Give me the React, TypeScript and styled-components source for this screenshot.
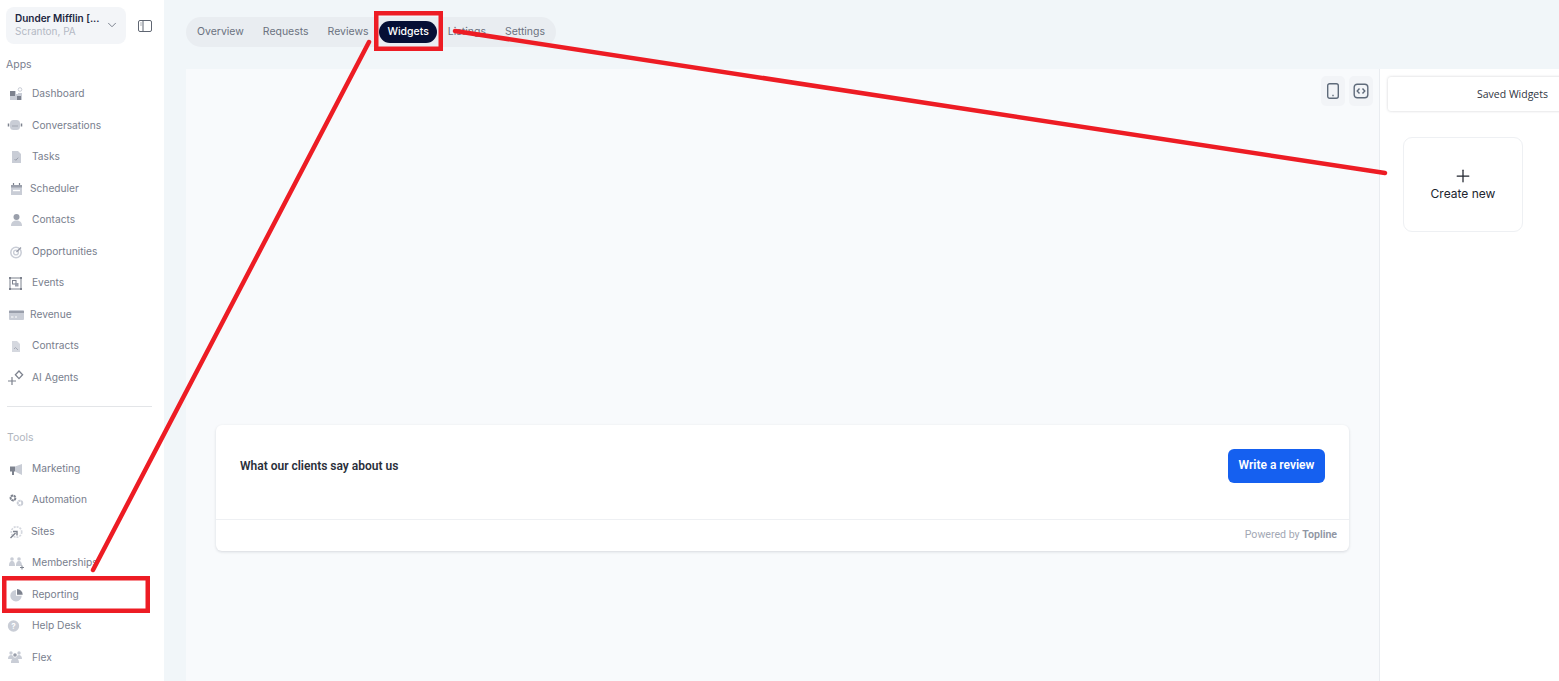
import React from 'react'
import styled, { createGlobalStyle } from 'styled-components'
import { ChevronDown, Plus } from 'lucide-react'

const GlobalStyle = createGlobalStyle`
  html, body {
    margin: 0;
    padding: 0;
    height: 100%;
    overflow: hidden;
    background: #f1f6f9;
  }

  * {
    box-sizing: border-box;
  }
`

const Page = styled.div`
  position: relative;
  display: flex;
  width: 100%;
  height: 100vh;
  overflow: hidden;
  font-family: Inter, 'Liberation Sans', sans-serif;
`

const Sidebar = styled.aside`
  flex: 0 0 164px;
  display: flex;
  flex-direction: column;
  padding-top: 7px;
  background: #fff;
`

const AccountRow = styled.div`
  display: flex;
  align-items: center;
  gap: 11px;
  padding-left: 6px;
`

const AccountCard = styled.div`
  display: flex;
  align-items: center;
  justify-content: space-between;
  width: 120px;
  height: 37px;
  padding: 0 7px 2px 9px;
  border-radius: 8px;
  background: #f3f5f8;
  color: #6b7280;
`

const AccountName = styled.div`
  font-size: 10px;
  font-weight: 600;
  line-height: 13px;
  color: #1c2540;
`

const AccountCity = styled.div`
  font-size: 10px;
  line-height: 13px;
  color: #b4b9c4;
`

const SectionLabel = styled.div<{ $muted?: boolean }>`
  padding-left: ${(p) => (p.$muted ? 7 : 6)}px;
  font-size: 10.5px;
  line-height: 13px;
  color: ${(p) => (p.$muted ? '#b0b5be' : '#7a8090')};
`

const AppsLabel = styled(SectionLabel)`
  margin-top: 14px;
`

const NavList = styled.nav<{ $top: number }>`
  display: flex;
  flex-direction: column;
  margin-top: ${(p) => p.$top}px;
`

const NavItem = styled.div`
  display: flex;
  align-items: center;
  height: 31.5px;
  padding-left: 7px;
  font-size: 10.2px;
  color: #787e8d;

  svg {
    flex: 0 0 auto;
    display: block;
  }
`

const IconSlot = styled.span<{ $width: number }>`
  flex: 0 0 ${(p) => p.$width}px;
  display: flex;
  align-items: center;
`

const Divider = styled.hr`
  width: 145px;
  height: 1px;
  margin: 13.4px 0 24px 7px;
  border: 0;
  background: #e3e5e8;
`

const Main = styled.main`
  flex: 1;
  min-width: 0;
  display: flex;
  flex-direction: column;
  padding-left: 22px;
`

const TopBar = styled.div`
  flex: 0 0 69px;
  padding-top: 17px;
`

const Tabs = styled.div`
  display: inline-flex;
  align-items: center;
  gap: 3px;
  height: 30px;
  padding: 0 3px;
  border-radius: 15px;
  background: #e9edf1;
`

const Tab = styled.div<{ $active?: boolean }>`
  height: 22px;
  padding: 0 8px;
  border-radius: 11px;
  font-size: 10.47px;
  line-height: 22px;
  color: ${(p) => (p.$active ? '#fff' : '#6b7280')};
  background: ${(p) => (p.$active ? '#050f35' : 'transparent')};
  font-weight: ${(p) => (p.$active ? 500 : 400)};
`

const Workspace = styled.div`
  flex: 1;
  display: flex;
  min-height: 0;
`

const Canvas = styled.section`
  flex: 1;
  min-width: 0;
  padding: 7px 6px 0 30px;
  border-right: 1px solid #e9ecf0;
  background: #f8fafc;
`

const CanvasTools = styled.div`
  display: flex;
  justify-content: flex-end;
  gap: 4px;
`

const ToolButton = styled.div`
  display: flex;
  align-items: center;
  justify-content: center;
  width: 24px;
  height: 30px;
  border-radius: 5px;
  background: #f2f4f7;
  color: #5f6b7a;
`

const WidgetCard = styled.article`
  margin: 319px 24px 0 0;
  border-radius: 6px;
  background: #fff;
  box-shadow: 0 1px 3px rgba(15, 23, 42, 0.14);
  font-family: Roboto, 'Liberation Sans', sans-serif;
`

const WidgetHeader = styled.header`
  display: flex;
  align-items: flex-start;
  justify-content: space-between;
  height: 95px;
  padding: 24px 24px 0;
  border-bottom: 1px solid #eef0f3;
`

const WidgetTitle = styled.h2`
  margin: 10px 0 0;
  font-size: 12px;
  font-weight: 600;
  line-height: 15px;
  color: #2a2f3a;
`

const ReviewButton = styled.button`
  width: 97px;
  height: 34px;
  padding: 0 0 2px;
  border: 0;
  border-radius: 6px;
  background: #1560f0;
  color: #fff;
  font-family: inherit;
  font-size: 12px;
  font-weight: 600;
`

const WidgetFooter = styled.footer`
  height: 31px;
  padding-right: 12px;
  font-size: 10.6px;
  line-height: 30px;
  text-align: right;
  color: #a3a8b4;

  b {
    font-weight: 600;
    color: #8f95a3;
  }
`

const SidePanel = styled.aside`
  flex: 0 0 179px;
  padding: 8px 0 0 8px;
  overflow: hidden;
  background: #fff;
`

const PanelTab = styled.div`
  height: 34px;
  margin-right: -8px;
  padding-left: 89px;
  border-radius: 3px 0 0 3px;
  background: #fff;
  box-shadow: 0 0 3px rgba(15, 23, 42, 0.2);
  font-family: 'Open Sans', 'Liberation Sans', sans-serif;
  font-size: 10.5px;
  line-height: 34px;
  color: #2f3542;
  white-space: nowrap;
`

const CreateCard = styled.div`
  display: flex;
  flex-direction: column;
  align-items: center;
  width: 120px;
  height: 95px;
  margin: 26px 0 0 15px;
  padding-top: 28px;
  border: 1px solid #eef0f3;
  border-radius: 9px;
  background: #fff;
  color: #20242e;
  font-size: 12px;
  line-height: 16px;
`

const Annotations = styled.svg`
  position: absolute;
  inset: 0;
  width: 100%;
  height: 100%;
  pointer-events: none;
`

const shade = '#c9cdd6'
const mid = '#9a9fab'
const dark = '#7d828e'

const Svg: React.FC<{ children: React.ReactNode }> = ({ children }) => (
  <svg width={18} height={16} viewBox="0 0 18 16" aria-hidden="true">
    {children}
  </svg>
)

const icons: Record<string, React.ReactNode> = {
  Dashboard: (
    <Svg>
      <path d="M3 6h6v3h2v-1h4v7H3z" fill={shade} />
      <path d="M3 6h5v5H3zM10 11h4v4h-4z" fill={dark} />
      <circle cx="13" cy="4.500" r="1.800" fill="none" stroke={shade} />
    </Svg>
  ),
  Conversations: (
    <Svg>
      <rect x="3" y="3" width="10" height="10" rx="3.500" fill={shade} />
      <path d="M1.500 6.500v3M14.500 6.500v3" stroke={dark} strokeWidth="1.500" />
      <path d="M5.500 9h1M7.500 9h1M9.500 9h1" stroke={dark} />
    </Svg>
  ),
  Tasks: (
    <Svg>
      <path d="M5 3h6l3 3v9H5z" fill={shade} />
      <path d="M7.500 11l1.300 1.300 2.400-2.600" fill="none" stroke={mid} />
    </Svg>
  ),
  Scheduler: (
    <Svg>
      <path d="M4 5h11v10H4z" fill={shade} />
      <path d="M4 5h11v2.500H4z" fill={mid} />
      <path d="M6.500 3v2M12.500 3v2" stroke={dark} strokeWidth="1.200" />
      <path d="M6 10.500h7" stroke="#fff" strokeWidth="1.400" />
    </Svg>
  ),
  Contacts: (
    <Svg>
      <circle cx="9.500" cy="6" r="3" fill={mid} />
      <path d="M4 15c0-4 2.500-5.500 5.500-5.500S15 11 15 15z" fill={shade} />
    </Svg>
  ),
  Opportunities: (
    <Svg>
      <circle cx="9" cy="9.500" r="5.200" fill="none" stroke={shade} strokeWidth="1.500" />
      <circle cx="9" cy="9.500" r="2.400" fill="none" stroke={shade} strokeWidth="1.300" />
      <path d="M9.500 9l4.500-4.500" stroke={mid} strokeWidth="1.500" />
    </Svg>
  ),
  Events: (
    <Svg>
      <rect x="3" y="4" width="11" height="11" fill="none" stroke={dark} />
      <path d="M2 3h2v2H2zM13 3h2v2h-2zM2 14h2v2H2zM13 14h2v2h-2z" fill={dark} />
      <rect x="5.500" y="6.500" width="3.500" height="3.500" fill="none" stroke={dark} />
      <rect x="8" y="9" width="3.500" height="3.500" fill={mid} />
    </Svg>
  ),
  Revenue: (
    <Svg>
      <rect x="2" y="4" width="15" height="10" rx="1" fill={shade} />
      <path d="M2 6h15" stroke={mid} strokeWidth="2" />
      <path d="M4 11h2.500M8 11h2" stroke="#fff" />
    </Svg>
  ),
  Contracts: (
    <Svg>
      <path d="M5 4h5l3 3v8H5z" fill="#d5d8df" />
      <path d="M7 12l1.500-1.500L11 13" fill="none" stroke={mid} strokeWidth="0.800" />
    </Svg>
  ),
  'AI Agents': (
    <Svg>
      <path d="M5 8v8M1 12h8" stroke={dark} strokeWidth="1.200" />
      <path d="M12 2l3.600 3.800L12 9.600 8.400 5.800z" fill="none" stroke={dark} strokeWidth="1.300" />
    </Svg>
  ),
  Marketing: (
    <Svg>
      <path d="M3 6.500h5v5H3z" fill={dark} />
      <path d="M8 6.500L15 4v11l-7-3.500z" fill={shade} />
      <path d="M5 11h2v4H5z" fill={dark} />
    </Svg>
  ),
  Automation: (
    <Svg>
      <circle cx="6" cy="7" r="2.400" fill="none" stroke={dark} strokeWidth="2" strokeDasharray="2.200 0.500" />
      <circle cx="13" cy="12" r="2.300" fill="none" stroke={shade} strokeWidth="2" strokeDasharray="2.200 0.500" />
    </Svg>
  ),
  Sites: (
    <Svg>
      <circle cx="9.500" cy="9" r="5.200" fill="none" stroke="#d5d8df" strokeWidth="1.700" strokeDasharray="2 1" />
      <path d="M3.500 15l5-5M6 8.500h4v4" fill="none" stroke={dark} strokeWidth="1.400" />
    </Svg>
  ),
  Memberships: (
    <Svg>
      <circle cx="5" cy="5" r="1.800" fill={shade} />
      <circle cx="12" cy="5" r="1.800" fill={shade} />
      <path d="M2 12c0-4 1.500-5 3-5s3 1 3 5zM9 12c0-4 1.500-5 3-5s3 1 3 5z" fill={shade} />
      <path d="M13 13.500h4M15 11.500v4" stroke={dark} />
    </Svg>
  ),
  Reporting: (
    <Svg>
      <path d="M9 4a5.700 5.700 0 1 0 5.700 5.700H9z" fill={shade} />
      <path d="M10 3a5.700 5.700 0 0 1 5.700 5.700H10z" fill={dark} />
    </Svg>
  ),
  'Help Desk': (
    <Svg>
      <circle cx="6.500" cy="9" r="5.700" fill={shade} />
      <text x="6.500" y="12" fontSize="8" fontWeight="700" textAnchor="middle" fill="#fff" fontFamily="Inter">
        ?
      </text>
    </Svg>
  ),
  Flex: (
    <Svg>
      <circle cx="4" cy="4" r="1.700" fill={shade} />
      <circle cx="12" cy="4" r="1.700" fill={shade} />
      <circle cx="8" cy="6" r="1.800" fill={mid} />
      <path d="M1 10c0-3 1.500-4 3-4s3 1 3 4zM9 10c0-3 1.500-4 3-4s3 1 3 4zM4 14c0-4 2-5.500 4-5.500s4 1.500 4 5.500z" fill={shade} />
    </Svg>
  ),
}

const appsNav = [
  { label: 'Dashboard', slot: 25 },
  { label: 'Conversations', slot: 25 },
  { label: 'Tasks', slot: 25 },
  { label: 'Scheduler', slot: 23 },
  { label: 'Contacts', slot: 25 },
  { label: 'Opportunities', slot: 25 },
  { label: 'Events', slot: 25 },
  { label: 'Revenue', slot: 23 },
  { label: 'Contracts', slot: 25 },
  { label: 'AI Agents', slot: 25 },
]

const toolsNav = [
  { label: 'Marketing', slot: 25 },
  { label: 'Automation', slot: 25 },
  { label: 'Sites', slot: 24 },
  { label: 'Memberships', slot: 25 },
  { label: 'Reporting', slot: 25 },
  { label: 'Help Desk', slot: 25 },
  { label: 'Flex', slot: 25 },
]

const tabs = ['Overview', 'Requests', 'Reviews', 'Widgets', 'Listings', 'Settings']

const renderNav = (items: { label: string; slot: number }[]) =>
  items.map((item) => (
    <NavItem key={item.label}>
      <IconSlot $width={item.slot}>{icons[item.label]}</IconSlot>
      {item.label}
    </NavItem>
  ))

const App: React.FC = () => (
  <Page>
    <GlobalStyle />
    <Sidebar>
      <AccountRow>
        <AccountCard>
          <div>
            <AccountName>Dunder Mifflin [...</AccountName>
            <AccountCity>Scranton, PA</AccountCity>
          </div>
          <ChevronDown size={14} strokeWidth={1.5} />
        </AccountCard>
        <svg width="16" height="14" viewBox="0 0 16 14" fill="none" stroke="#5f6672" aria-hidden="true">
          <rect x="1.500" y="1.500" width="13" height="11" rx="1.500" />
          <path d="M6 1.500v11M3.500 4h1M3.500 6h1" />
        </svg>
      </AccountRow>
      <AppsLabel>Apps</AppsLabel>
      <NavList $top={6.6}>{renderNav(appsNav)}</NavList>
      <Divider />
      <SectionLabel $muted>Tools</SectionLabel>
      <NavList $top={8}>{renderNav(toolsNav)}</NavList>
    </Sidebar>

    <Main>
      <TopBar>
        <Tabs>
          {tabs.map((tab) => (
            <Tab key={tab} $active={tab === 'Widgets'}>
              {tab}
            </Tab>
          ))}
        </Tabs>
      </TopBar>
      <Workspace>
        <Canvas>
          <CanvasTools>
            <ToolButton>
              <svg width="14" height="18" viewBox="0 0 14 18" fill="none" stroke="currentColor" strokeWidth="1.400" aria-hidden="true">
                <rect x="1.700" y="1.700" width="10.600" height="14.600" rx="2" />
                <path d="M6.300 13.500h1.400" strokeWidth="1.600" />
              </svg>
            </ToolButton>
            <ToolButton>
              <svg width="16" height="16" viewBox="0 0 16 16" fill="none" stroke="currentColor" strokeWidth="1.400" aria-hidden="true">
                <rect x="1.200" y="1.200" width="13.600" height="13.600" rx="3" />
                <path d="M6.500 5.500L4.200 8l2.300 2.500M9.500 5.500L11.800 8l-2.300 2.500" />
              </svg>
            </ToolButton>
          </CanvasTools>
          <WidgetCard>
            <WidgetHeader>
              <WidgetTitle>What our clients say about us</WidgetTitle>
              <ReviewButton>Write a review</ReviewButton>
            </WidgetHeader>
            <WidgetFooter>
              Powered by <b>Topline</b>
            </WidgetFooter>
          </WidgetCard>
        </Canvas>
        <SidePanel>
          <PanelTab>Saved Widgets</PanelTab>
          <CreateCard>
            <Plus size={20} strokeWidth={1.5} />
            Create new
          </CreateCard>
        </SidePanel>
      </Workspace>
    </Main>

    <Annotations aria-hidden="true">
      <g fill="none" stroke="#ed1c24" strokeWidth="4.500">
        <rect x="4.250" y="578.250" width="143.500" height="32.500" />
        <rect x="376.250" y="13.250" width="64.500" height="35.500" />
      </g>
      <g stroke="#ed1c24" strokeWidth="4.500" strokeLinecap="round">
        <path d="M369 42L93 570" />
        <path d="M455 31L1385 173" />
      </g>
    </Annotations>
  </Page>
)

export default App
